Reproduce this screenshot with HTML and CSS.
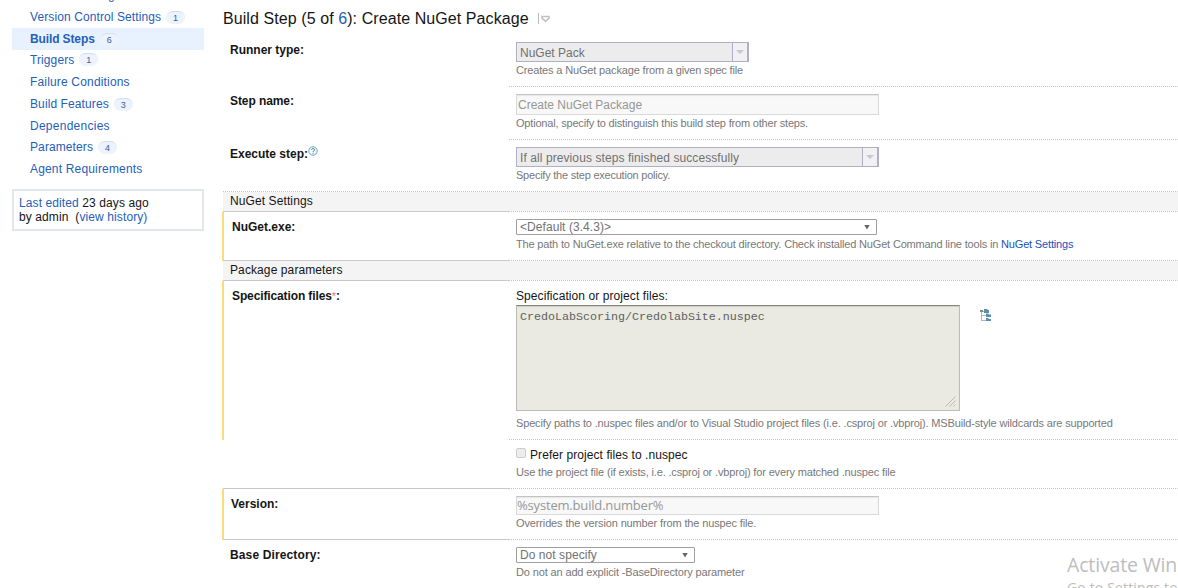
FILE: index.html
```
<!DOCTYPE html>
<html lang="en">
<head>
<meta charset="utf-8">
<title>Build Step: Create NuGet Package</title>
<link rel="stylesheet" href="styles.css">
</head>
<body>
<div class="page">
  <aside class="sidebar">
    <nav class="menu">
      <a class="item cut"><span class="label">General Settings</span></a>
      <a class="item"><span class="label">Version Control Settings</span><span class="count">1</span></a>
      <a class="item active"><span class="label">Build Steps</span><span class="count">6</span></a>
      <a class="item triggers"><span class="label">Triggers</span><span class="count">1</span></a>
      <a class="item wider"><span class="label">Failure Conditions</span></a>
      <a class="item"><span class="label">Build Features</span><span class="count">3</span></a>
      <a class="item widest"><span class="label">Dependencies</span></a>
      <a class="item"><span class="label">Parameters</span><span class="count">4</span></a>
      <a class="item wider"><span class="label">Agent Requirements</span></a>
    </nav>
    <div class="edited"><a>Last edited</a> 23 days ago<br>by admin &nbsp;(<a>view history)</a></div>
  </aside>
  <main class="content">
    <h1 class="title"><span class="title-text">Build Step (5 of <a>6</a>): Create NuGet Package</span>
      <svg class="title-menu" width="13" height="11" viewBox="0 0 13 11"><path d="M1.500 0v11" stroke="#bbb"/><path d="M5 3.500h7v1.600L8.500 8.300 5 5.100z" fill="#fff" stroke="#c2c2c2" stroke-width="1.600"/></svg>
    </h1>
    <section class="row runner">
      <div class="name">Runner type:</div>
      <div class="value">
        <div class="combo short"><span>NuGet Pack</span><i class="drop"></i></div>
        <p class="note">Creates a NuGet package from a given spec file</p>
      </div>
    </section>
    <section class="row step">
      <div class="name">Step name:</div>
      <div class="value">
        <div class="input">Create NuGet Package</div>
        <p class="note">Optional, specify to distinguish this build step from other steps.</p>
      </div>
    </section>
    <section class="row execute">
      <div class="name"><span>Execute step:</span><svg class="help" width="10" height="10" viewBox="0 0 10 10"><circle cx="5" cy="5" r="4.200" fill="#f4fafc" stroke="#6fa2be"/><path d="M3.500 4c0-1.900 3-1.900 3-.2C6.500 5 5 4.800 5 6M5 6.800v1" fill="none" stroke="#3f7f9f"/></svg></div>
      <div class="value">
        <div class="combo"><span>If all previous steps finished successfully</span><i class="drop"></i></div>
        <p class="note">Specify the step execution policy.</p>
      </div>
    </section>
    <h2 class="group">NuGet Settings</h2>
    <section class="row marked exe">
      <div class="name">NuGet.exe:</div>
      <div class="value">
        <div class="select wide"><span>&lt;Default (3.4.3)&gt;</span><i class="arrow"></i></div>
        <p class="note">The path to NuGet.exe relative to the checkout directory. Check installed NuGet Command line tools in <a>NuGet Settings</a></p>
      </div>
    </section>
    <h2 class="group">Package parameters</h2>
    <section class="row marked spec">
      <div class="name">Specification files<span class="required">*</span>:</div>
      <div class="value">
        <div class="caption">Specification or project files:</div>
        <div class="files">
          <div class="area"><span>CredoLabScoring/CredolabSite.nuspec</span>
            <svg class="grip" width="11" height="11" viewBox="0 0 11 11"><path d="M.5 10.500l10-10M4.500 10.500l6-6M8.500 10.500l2-2" stroke="#b9b9b2"/></svg>
          </div>
          <svg class="tree" width="12" height="13" viewBox="0 0 12 13"><path d="M1.500 2v9.500M1 2.500h4M1 6.500h5M1 11.500h5" fill="none" stroke="#b4b4b4"/><path d="M0 1h3v2H0z" fill="#888"/><path d="M4 0h3l1 1h1v3H4zM6 4.500h2l1 1h2V8H6zM6 9h2l1 1h2v2H6z" fill="#5b90ae"/></svg>
        </div>
        <p class="note">Specify paths to .nuspec files and/or to Visual Studio project files (i.e. .csproj or .vbproj). MSBuild-style wildcards are supported</p>
      </div>
    </section>
    <section class="row prefer">
      <div class="name"></div>
      <div class="value">
        <div class="check"><i class="box"></i><span>Prefer project files to .nuspec</span></div>
        <p class="note">Use the project file (if exists, i.e. .csproj or .vbproj) for every matched .nuspec file</p>
      </div>
    </section>
    <section class="row marked version">
      <div class="name">Version:</div>
      <div class="value">
        <div class="input pattern">%system.build.number%</div>
        <p class="note">Overrides the version number from the nuspec file.</p>
      </div>
    </section>
    <section class="row base">
      <div class="name">Base Directory:</div>
      <div class="value">
        <div class="select"><span>Do not specify</span><i class="arrow"></i></div>
        <p class="note">Do not an add explicit -BaseDirectory parameter</p>
      </div>
    </section>
  </main>
</div>
<div class="watermark"><div class="wm-head">Activate Win</div><div class="wm-sub">Go to Settings to</div></div>
</body>
</html>
```
FILE: styles.css
```
* { box-sizing: border-box; }
body {
  margin: 0;
  height: 588px;
  overflow: hidden;
  position: relative;
  background: #fff;
  color: #151515;
  font: 12px/14px "Liberation Sans", Arial, sans-serif;
}
a { color: #2560b8; text-decoration: none; }
h1, h2, p { margin: 0; font-weight: normal; }

.page { display: grid; grid-template-columns: 222px 956px; height: 588px; }

/* Sidebar */
.sidebar { padding-left: 12px; overflow: hidden; }
.menu { margin-top: -16px; width: 192px; }
.item { display: flex; align-items: center; height: 22px; padding-left: 18px; letter-spacing: .1px; }
.item.triggers { height: 21px; padding-bottom: 2px; }
.item:nth-child(7) { height: 21px; }
.item.wider { letter-spacing: .17px; }
.item.widest { letter-spacing: .26px; }
.item.active { background: #e8f2fe; font-weight: bold; letter-spacing: -.12px; }
.count {
  width: 19px;
  height: 13px;
  margin-left: 5px;
  border-top: 1px solid #d0dff0;
  border-radius: 7px;
  background: #edf3fc;
  color: #3d5a9a;
  font: 9px/12px "Liberation Sans", Arial, sans-serif;
  text-align: center;
}
.edited {
  width: 192px;
  height: 42px;
  margin-top: 9px;
  padding: 5px 5px;
  border: 2px solid #e2e7ed;
  letter-spacing: .1px;
}

/* Step form */
.content { overflow: hidden; }
.title {
  display: flex;
  align-items: center;
  height: 36px;
  padding: 1px 0 0 1px;
  font-size: 16px;
  line-height: 20px;
  letter-spacing: .08px;
}
.title-menu { margin-left: 8px; }
.row { display: grid; grid-template-columns: 288px 1fr; }
.name { padding: 7px 0 0 8px; font-weight: bold; }
.value { padding: 6px 0 0 6px; position: relative; }
.value::after, .group::after {
  content: "";
  position: absolute;
  left: -1px;
  right: 0;
  bottom: 0;
  height: 1px;
  background: repeating-linear-gradient(90deg, #c4c4c4 0 1px, #fff 1px 2px);
}
.runner { height: 51px; }
.step { height: 53px; }
.step .name { letter-spacing: -.08px; }
.execute { height: 52px; }
.execute .name { display: flex; align-items: flex-start; }
.execute .value { padding-top: 7px; }
.execute .value::after { left: -287px; }
.exe, .prefer { height: 49px; }
.spec { height: 159px; }
.version { height: 51px; }
.base { height: 48px; }
.base .value::after { display: none; }
.step .value { padding-top: 7px; }
.marked .name { border-left: 2px solid #fbdc77; padding-left: 7px; padding-top: 8px; }
.exe .name, .version .name { border-bottom: 1px solid #c9c9c9; }
.spec .name { padding-left: 8px; letter-spacing: -.12px; }
.exe .name { padding-left: 8px; }
.base .name { padding-top: 8px; letter-spacing: .13px; }
.prefer .name { border-bottom: 1px solid #c9c9c9; margin-left: 1px; }

.group {
  height: 20px;
  margin-left: 1px;
  padding: 2px 0 0 7px;
  position: relative;
  background: #f4f4f4;
  font-size: 12px;
  line-height: 14px;
  letter-spacing: .1px;
}
.group::after {
  background: linear-gradient(#c9c9c9, #c9c9c9) 0 0 / 287px 1px no-repeat,
    repeating-linear-gradient(90deg, #c4c4c4 0 1px, #fff 1px 2px);
  left: 0;
}
.note { color: #787878; font-size: 11px; line-height: 13px; letter-spacing: -.155px; white-space: nowrap; }
.note a { color: #1852bd; }
.step .note { letter-spacing: -.19px; }
.execute .note { letter-spacing: -.23px; }
.exe .note { letter-spacing: -.17px; }
.version .note, .base .note { letter-spacing: -.135px; }

.combo {
  display: flex;
  justify-content: space-between;
  width: 363px;
  height: 20px;
  margin-bottom: 2px;
  padding-left: 3px;
  border: 1px solid #b0afc6;
  border-right-width: 2px;
  background: #ececec;
  color: #717171;
  line-height: 20px;
  letter-spacing: .085px;
}
.combo.short { width: 233px; letter-spacing: 0; }
.drop { width: 15px; border-left: 1px solid #b0afc6; background: #f1f1f5; }
.drop::after { content: ""; display: block; margin: 7px auto 0; width: 8px; height: 4px; background: #c8c8cc; clip-path: polygon(0 0, 100% 0, 50% 100%); }
.input {
  width: 363px;
  height: 21px;
  margin-bottom: 2px;
  padding-left: 1px;
  border: 1px solid #d9d9d9;
  border-top-color: #c3c3c3;
  background: #f8f8f8;
  box-shadow: inset 0 1px 1px #e6e6e6;
  color: #979797;
  line-height: 20px;
}
.input.pattern { height: 19px; padding-left: 0; font: 13px/17px "Open Sans", sans-serif; letter-spacing: -.18px; }
.version .value { padding-top: 7px; }
.select {
  display: flex;
  align-items: center;
  justify-content: space-between;
  width: 179px;
  height: 16px;
  margin-bottom: 3px;
  padding: 0 6px 0 3px;
  border: 1px solid #a0a0a0;
  border-radius: 1px;
  color: #727272;
  line-height: 14px;
  letter-spacing: .06px;
}
.select.wide { width: 361px; }
.exe .value, .base .value { padding-top: 7px; }
.arrow { width: 6px; height: 5px; background: #666; clip-path: polygon(0 0, 100% 0, 50% 100%); }
.help { margin-top: -1px; }
.required { color: #ef7054; font-weight: normal; font-size: 11px; }
.spec .value { padding-top: 8px; }
.caption { height: 16px; letter-spacing: .08px; }
.files { display: flex; gap: 20px; margin-bottom: 6px; }
.area {
  position: relative;
  width: 444px;
  height: 106px;
  padding: 4px 3px;
  border: 1px solid #bdbdb7;
  border-top-color: #84847f;
  background: #eaeae2;
  box-shadow: inset 0 1px 1px #d0d0ca;
  color: #606060;
  font: 11.670px/14px "Liberation Mono", monospace;
}
.grip { position: absolute; right: 3px; bottom: 3px; }
.tree { margin-top: 4px; }
.check { display: flex; height: 19px; line-height: 17px; letter-spacing: .07px; }
.prefer .value { padding-top: 7px; }
.box { width: 10px; height: 10px; margin: 1px 4px 0 0; border: 1px solid #ccc; border-radius: 2px; background: #ededed; }

/* Desktop activation notice over the page corner */
.watermark {
  position: absolute;
  left: 1067px;
  top: 552px;
  width: 111px;
  height: 36px;
  overflow: hidden;
  color: #bdbdbd;
  font-family: "Open Sans", sans-serif;
  white-space: nowrap;
}
.wm-head { font-size: 19.500px; line-height: 25px; letter-spacing: -.15px; }
.wm-sub { font-size: 14px; line-height: 21px; letter-spacing: .15px; }
```
